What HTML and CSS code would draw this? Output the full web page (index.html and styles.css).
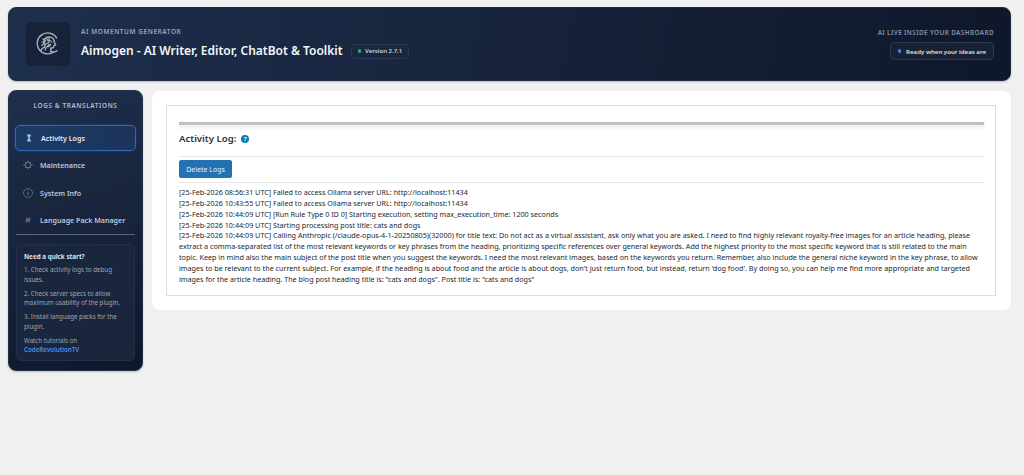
FILE: index.html
```html
<!DOCTYPE html>
<html lang="en">
<head>
<meta charset="utf-8">
<title>Aimogen Activity Logs</title>
<link rel="stylesheet" href="styles.css">
</head>
<body>
<div class="page">
  <header class="hero">
    <div class="hero-left">
      <div class="logo-box">
        <svg class="logo" viewBox="0 0 24 24" width="24" height="24" fill="none" stroke="#b0b5bc">
          <path d="M17.800 20A10.500 10.500 0 1 1 21 6.500" stroke-width="1.300"/>
          <path d="M21.500 18.500c-2 1.800-4.500 2-6.800 1l.3-3.500c2 .2 3-.6 3.100-2.600l1.500-.6-1.300-2.500c.2-3.300-2.300-5.600-5.300-5.400-3.300.2-5.500 2.800-5.200 5.700l1.300 1.600-.6 3c-1.500.6-3 1.900-3.800 3.500" stroke-width="1.400"/>
          <path d="M6.500 6.500l3.500 2.500M5.500 10l4 0M5.500 13.500l3.500-2.500M10 5.500l2.500 4M13 5l0 4.500M10 12l3.500-2M11 15l2.500-3M9 18.500l1.500-4M14 8l2 2.500M12.500 15l2.500-3" stroke-width="1.200"/>
        </svg>
      </div>
      <div class="hero-titles">
        <div class="eyebrow">AI MOMENTUM GENERATOR</div>
        <div class="title-row">
          <h1 class="title">Aimogen - AI Writer, Editor, ChatBot &amp; Toolkit</h1>
          <span class="pill version"><i class="dot dot-green"></i>Version 2.7.1</span>
        </div>
      </div>
    </div>
    <div class="hero-right">
      <div class="eyebrow eyebrow-right">AI LIVE INSIDE YOUR DASHBOARD</div>
      <span class="pill ready"><i class="dot dot-blue"></i>Ready when your ideas are</span>
    </div>
  </header>

  <div class="columns">
    <aside class="sidebar">
      <div class="side-title">LOGS &amp; TRANSLATIONS</div>
      <nav class="nav">
        <a class="nav-item active">
          <svg class="nav-icon" viewBox="0 0 12 12" width="12" height="12"><path d="M4 2.500h4v.8L6.500 6 8 8.700v.8H4v-.8L5.500 6 4 3.300z" fill="#9fbdf0"/></svg>
          Activity Logs
        </a>
        <a class="nav-item">
          <svg class="nav-icon" viewBox="0 0 12 12" width="12" height="12" fill="none" stroke="#6d7786"><circle cx="6" cy="6" r="2.800"/><path d="M6 1.500v1.700M6 8.800v1.700M1 6h2M9 6h2M3 3l1 1M8 8l1 1M9 3L8 4M4 8L3 9" stroke-width=".8"/></svg>
          Maintenance
        </a>
        <a class="nav-item">
          <svg class="nav-icon" viewBox="0 0 12 12" width="12" height="12" fill="none" stroke="#6d7786"><circle cx="6" cy="6" r="4.500" stroke-width=".8"/><path d="M6 5v3.500M6 3v1" stroke-width=".9"/></svg>
          System Info
        </a>
        <a class="nav-item">
          <svg class="nav-icon" viewBox="0 0 12 12" width="12" height="12" fill="none" stroke="#7a8494"><path d="M5.500 3.500L4.700 8.500M7.700 3.500L6.900 8.500M3.800 5.200h4.600M3.600 6.900h4.600" stroke-width=".8"/></svg>
          Language Pack Manager
        </a>
      </nav>
      <div class="side-rule"></div>
      <div class="tips">
        <div class="tips-title">Need a quick start?</div>
        <p class="tip">1. Check activity logs to debug issues.</p>
        <p class="tip">2. Check server specs to allow maximum usability of the plugin.</p>
        <p class="tip">3. Install language packs for the plugin.</p>
        <p class="tip">Watch tutorials on <a class="tips-link">CodeRevolutionTV</a></p>
      </div>
    </aside>

    <main class="card">
      <div class="inner">
        <div class="shadow-rule"></div>
        <div class="log-heading">
          <h2 class="log-title">Activity Log:</h2>
          <span class="help">?</span>
        </div>
        <div class="thin-rule"></div>
        <button class="delete-btn" type="button">Delete Logs</button>
        <div class="thin-rule rule-tight"></div>
        <div class="log">[25-Feb-2026 08:56:31 UTC] Failed to access Ollama server URL: http://localhost:11434<br>
[25-Feb-2026 10:43:55 UTC] Failed to access Ollama server URL: http://localhost:11434<br>
[25-Feb-2026 10:44:09 UTC] [Run Rule Type 0 ID 0] Starting execution, setting max_execution_time: 1200 seconds<br>
[25-Feb-2026 10:44:09 UTC] Starting processing post title: cats and dogs<br>
[25-Feb-2026 10:44:09 UTC] Calling Anthropic (/claude-opus-4-1-20250805)(32000) for title text: Do not act as a virtual assistant, ask only what you are asked. I need to find highly relevant royalty-free images for an article heading, please extract a comma-separated list of the most relevant keywords or key phrases from the heading, prioritizing specific references over general keywords. Add the highest priority to the most specific keyword that is still related to the main topic. Keep in mind also the main subject of the post title when you suggest the keywords. I need the most relevant images, based on the keywords you return. Remember, also include the general niche keyword in the key phrase, to allow images to be relevant to the current subject. For example, if the heading is about food and the article is about dogs, don't just return food, but instead, return 'dog food'. By doing so, you can help me find more appropriate and targeted images for the article heading. The blog post heading title is: "cats and dogs". Post title is: "cats and dogs"</div>
      </div>
    </main>
  </div>
</div>
</body>
</html>
```
FILE: styles.css
```css
* { box-sizing: border-box; }
html, body { margin: 0; padding: 0; }
body {
  background: #f0f0f1;
  font-family: "Noto Sans", "Open Sans", sans-serif;
  color: #2c3338;
  height: 475px;
  overflow: hidden;
}
.page { width: 1011px; padding: 7px 0 0 8px; }

.hero {
  height: 74px;
  border-radius: 8px;
  background: linear-gradient(100deg, #1e2f4d 0%, #16233b 50%, #0f172a 100%);
  border: 1px solid #1d2a40;
  display: flex;
  justify-content: space-between;
  align-items: center;
  padding: 0 16px;
  box-shadow: 0 1px 2px rgba(15, 23, 42, .25);
}
.hero-left { display: flex; align-items: center; gap: 10px; }
.logo-box {
  width: 46px;
  height: 46px;
  border-radius: 7px;
  background: #17233a;
  border: 1px solid #202d43;
  display: flex;
  align-items: center;
  justify-content: center;
}
.logo { display: block; }
.hero-titles { display: flex; flex-direction: column; gap: 4px; }
.eyebrow {
  font-size: 6.4px;
  font-weight: 600;
  letter-spacing: .62px;
  color: #9aa7ba;
  line-height: 10px;
}
.title-row { display: flex; align-items: center; gap: 8px; }
.title {
  margin: 0;
  font-size: 12px;
  font-weight: 600;
  line-height: 20px;
  color: #f5f7fa;
}
.pill {
  display: inline-flex;
  align-items: center;
  border: 1px solid #2a3a52;
  border-radius: 4px;
  color: #cbd5e1;
  font-weight: 600;
  background: rgba(30, 41, 59, .55);
}
.version { height: 15px; padding: 0 6px; font-size: 6px; gap: 4px; }
.ready { height: 18px; padding: 0 7px; font-size: 6.1px; gap: 5px; color: #dbe3ee; }
.dot { width: 3.5px; height: 3.5px; border-radius: 50%; display: block; }
.dot-green { background: #10b981; }
.dot-blue { background: #3b82f6; }
.hero-right { display: flex; flex-direction: column; align-items: flex-end; gap: 4px; }
.eyebrow-right { font-size: 6.4px; color: #8592a6; letter-spacing: .38px; }

.columns { display: flex; align-items: flex-start; gap: 9px; margin-top: 9px; }

.sidebar {
  width: 135px;
  height: 281px;
  flex: none;
  border-radius: 8px;
  background: linear-gradient(160deg, #1e2f4d 0%, #16233b 55%, #0f172a 100%);
  border: 1px solid #243248;
  padding: 10px 6px 9px;
  box-shadow: 0 1px 2px rgba(15, 23, 42, .25);
}
.side-title {
  text-align: center;
  font-size: 6.4px;
  font-weight: 600;
  letter-spacing: .62px;
  color: #b4bfce;
  line-height: 10px;
}
.nav { display: flex; flex-direction: column; gap: 2px; margin-top: 14px; }
.nav-item {
  height: 25.5px;
  display: flex;
  align-items: center;
  gap: 6px;
  padding-left: 7px;
  border-radius: 5px;
  font-size: 7.1px;
  font-weight: 600;
  color: #bcc8da;
  background: rgba(30, 41, 59, .3);
}
.nav-item.active {
  background: linear-gradient(90deg, #1d3a66, #1c3459);
  border: 1px solid #2a6db5;
  color: #e3ebf7;
  box-shadow: 0 0 3px rgba(37, 99, 235, .4);
}
.nav-icon { flex: none; display: block; }
.side-rule { height: 1px; background: #5b6575; margin: 1px 1px 0; }
.tips {
  margin: 9px 1px 0;
  padding: 7px 7px;
  border-radius: 5px;
  border: 1px solid #223047;
  background: #1a263d;
  height: 117px;
}
.tips-title { font-size: 6.3px; font-weight: 700; color: #dde3ec; line-height: 9px; margin-bottom: 4px; }
.tip { margin: 0 0 4.5px; font-size: 6.2px; line-height: 9.5px; color: #9aa7b8; }
.tips-link { display: block; color: #4f8fe8; font-weight: 600; }

.card {
  flex: 1;
  height: 219px;
  margin-top: 1px;
  background: #fff;
  border-radius: 8px;
  padding: 14px 15px 14px 14px;
}
.inner {
  height: 191px;
  border: 1px solid #dcdcde;
  padding: 16px 11px 0 12px;
}
.shadow-rule {
  height: 3px;
  background: #bfc0c3;
  box-shadow: 0 2px 4px rgba(0, 0, 0, .12);
}
.log-heading { display: flex; align-items: center; gap: 5px; height: 31px; padding-bottom: 4px; }
.log-title { margin: 0; font-size: 9.6px; font-weight: 600; color: #2c3338; line-height: 14px; }
.help {
  width: 8px;
  height: 8px;
  border-radius: 50%;
  background: #0b7bb0;
  color: #fff;
  font-size: 6px;
  font-weight: 700;
  line-height: 8px;
  text-align: center;
}
.thin-rule { height: 1px; background: #e5e5e6; }
.delete-btn {
  display: block;
  width: 53px;
  height: 18px;
  margin: 3px 0 4px;
  padding: 0;
  border: 1px solid #2271b1;
  border-radius: 2px;
  background: #2271b1;
  color: #eaf2f8;
  font-family: inherit;
  font-size: 7px;
  font-weight: 400;
}
.rule-tight { margin-bottom: 4px; }
.log { font-size: 7.2px; line-height: 10.85px; color: #23282d; }
```
